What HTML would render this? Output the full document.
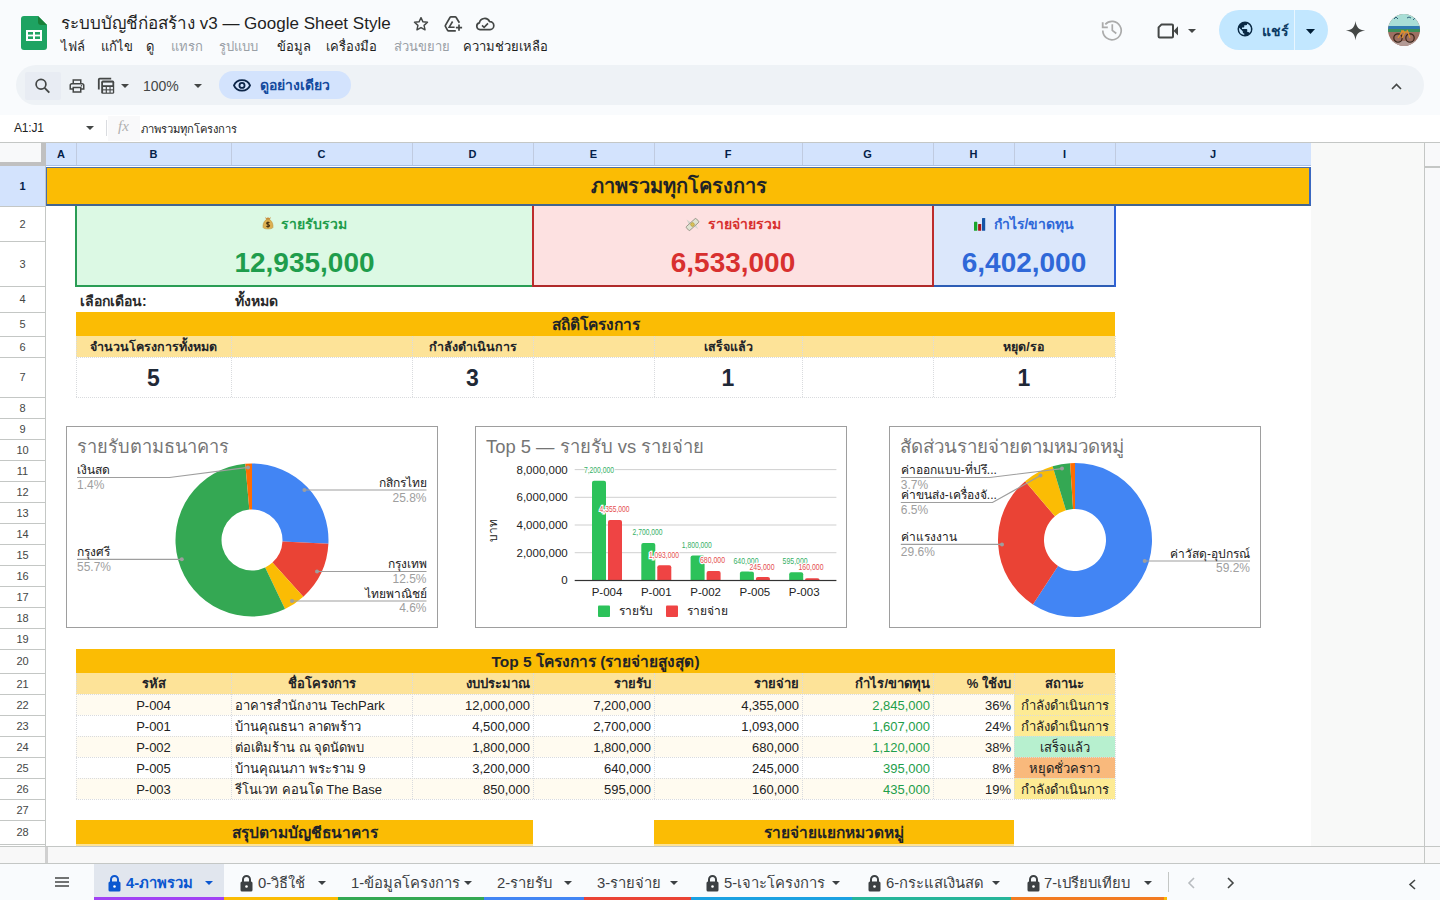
<!DOCTYPE html><html><head><meta charset="utf-8"><style>
*{box-sizing:border-box;margin:0;padding:0}
html,body{width:1440px;height:900px;overflow:hidden;background:#f9fbfd;font-family:'Liberation Sans',sans-serif;color:#1f1f1f}
.a{position:absolute}
.c{position:absolute;display:flex;align-items:center;white-space:nowrap;overflow:hidden}
svg{position:absolute;overflow:visible}
</style></head><body>

<svg style="left:21px;top:16px" width="26" height="34" viewBox="0 0 26 34">
<path d="M3 0H17L26 9V31A3 3 0 0 1 23 34H3A3 3 0 0 1 0 31V3A3 3 0 0 1 3 0Z" fill="#1ea362"/>
<path d="M17 0L26 9H20A3 3 0 0 1 17 6Z" fill="#188038"/>
<rect x="5" y="14" width="16" height="11" fill="#fff"/>
<rect x="7" y="16" width="5" height="2.6" fill="#1ea362"/><rect x="14" y="16" width="5" height="2.6" fill="#1ea362"/>
<rect x="7" y="20.4" width="5" height="2.6" fill="#1ea362"/><rect x="14" y="20.4" width="5" height="2.6" fill="#1ea362"/>
</svg>
<div class="a" style="left:61px;top:9px;font-size:17px;color:#1f1f1f;white-space:nowrap">ระบบบัญชีก่อสร้าง v3 — Google Sheet Style</div>
<svg style="left:412px;top:15px" width="18" height="18" viewBox="0 0 24 24"><path d="M12 3.5l2.6 5.6 6.1.6-4.6 4.1 1.3 6-5.4-3.1-5.4 3.1 1.3-6-4.6-4.1 6.1-.6z" fill="none" stroke="#444746" stroke-width="1.9" stroke-linejoin="round"/></svg>
<svg style="left:0;top:0" width="520" height="50"><path d="M459.4 22.8L456 17.3Q455.7 16.9 455.2 16.9H450.9Q450.4 16.9 450.1 17.3L445.4 25.4Q445.1 25.9 445.4 26.4L447.6 30.3Q447.9 30.8 448.4 30.8H455.8" fill="none" stroke="#444746" stroke-width="1.7" stroke-linejoin="round"/><path d="M452.6 21.5L449.2 27.2H454.6" fill="none" stroke="#444746" stroke-width="1.6"/><path d="M459 24.6V30.8M455.9 27.7H462.1" stroke="#444746" stroke-width="1.7"/><path d="M480 29.6A3.4 3.4 0 0 1 479.4 22.9A5.4 5.4 0 0 1 489.6 21.6A4 4 0 0 1 490 29.6Z" fill="none" stroke="#444746" stroke-width="1.7" stroke-linejoin="round"/><path d="M482 25.4L484.1 27.3L488 23.4" fill="none" stroke="#444746" stroke-width="1.6"/></svg>
<div class="a" style="left:61px;top:36px;font-size:13px;color:#1f1f1f;white-space:nowrap">ไฟล์</div>
<div class="a" style="left:101px;top:36px;font-size:13px;color:#1f1f1f;white-space:nowrap">แก้ไข</div>
<div class="a" style="left:146px;top:36px;font-size:13px;color:#1f1f1f;white-space:nowrap">ดู</div>
<div class="a" style="left:171px;top:36px;font-size:13px;color:#9aa0a6;white-space:nowrap">แทรก</div>
<div class="a" style="left:219px;top:36px;font-size:13px;color:#9aa0a6;white-space:nowrap">รูปแบบ</div>
<div class="a" style="left:277px;top:36px;font-size:13px;color:#1f1f1f;white-space:nowrap">ข้อมูล</div>
<div class="a" style="left:326px;top:36px;font-size:13px;color:#1f1f1f;white-space:nowrap">เครื่องมือ</div>
<div class="a" style="left:394px;top:36px;font-size:13px;color:#9aa0a6;white-space:nowrap">ส่วนขยาย</div>
<div class="a" style="left:463px;top:36px;font-size:13px;color:#1f1f1f;white-space:nowrap">ความช่วยเหลือ</div>
<svg style="left:0;top:0" width="1200" height="50"><path d="M1105.3 24.3A9.2 9.2 0 1 1 1102.8 30.6" fill="none" stroke="#ababab" stroke-width="1.7"/><path d="M1102.7 22.2V27.3H1107.8" fill="none" stroke="#ababab" stroke-width="1.8"/><path d="M1112.3 24.3V30.4L1116.3 33.5" fill="none" stroke="#ababab" stroke-width="1.7"/><path d="M1161.6 24.4H1172Q1173 24.4 1173 25.4V36.5Q1173 37.5 1172 37.5H1159.6Q1158.6 37.5 1158.6 36.5V27.4Z" fill="none" stroke="#444746" stroke-width="2" stroke-linejoin="round"/><path d="M1173.6 30.9L1178 26.2V35.6Z" fill="#444746"/></svg>
<svg style="left:1188px;top:29px" width="8" height="4" viewBox="0 0 8 4"><path d="M0 0h8L4 4z" fill="#444746"/></svg>
<div style="position:absolute;left:1219px;top:10px;width:109px;height:40px;background:#c2e7ff;border-radius:20px"></div>
<div style="position:absolute;left:1294px;top:10px;width:1px;height:40px;background:#e9f6ff"></div>
<svg style="left:1236px;top:20px" width="18" height="18" viewBox="0 0 24 24"><path d="M12 2a10 10 0 1 0 0 20 10 10 0 0 0 0-20zm-1 17.93A8 8 0 0 1 4 12c0-.62.08-1.21.21-1.79L9 15v1a2 2 0 0 0 2 2zm6.9-2.54A2 2 0 0 0 16 16h-1v-3a1 1 0 0 0-1-1H8v-2h2a1 1 0 0 0 1-1V7h2a2 2 0 0 0 2-2v-.41a7.98 7.98 0 0 1 2.9 12.8z" fill="#0a2a45"/></svg>
<div class="a" style="left:1262px;top:20px;font-size:14px;font-weight:bold;color:#0b3a63">แชร์</div>
<svg style="left:1306px;top:29px" width="9" height="5" viewBox="0 0 9 5"><path d="M0 0h9L4.5 5z" fill="#001d35"/></svg>
<svg style="left:1345px;top:20px" width="21" height="21" viewBox="0 0 24 24"><path d="M12 1C12.9 8.2 15.8 11.1 23 12 15.8 12.9 12.9 15.8 12 23 11.1 15.8 8.2 12.9 1 12 8.2 11.1 11.1 8.2 12 1z" fill="#444746"/></svg>
<svg style="left:1388px;top:14px" width="32" height="32" viewBox="0 0 32 32"><defs><clipPath id="av"><circle cx="16" cy="16" r="16"/></clipPath></defs><g clip-path="url(#av)">
<rect width="32" height="32" fill="#9c6f62"/><rect y="0" width="32" height="12" fill="#a9ded6"/><path d="M6 5l2-2 2 2M19 4l2-1 2 1M25 6l2-2" stroke="#2f5f7a" stroke-width="1" fill="none"/><rect y="12" width="32" height="3" fill="#2f7bb0"/><rect y="15" width="32" height="3" fill="#3b8f5a"/><rect y="27" width="32" height="5" fill="#b39a95"/>
<circle cx="10" cy="24" r="4.2" fill="none" stroke="#3a2418" stroke-width="1.2"/><circle cx="22" cy="24" r="4.2" fill="none" stroke="#3a2418" stroke-width="1.2"/><path d="M10 24l4-6h6l2 6M14 24l3-6M13 17h3M19 16l1 2" fill="none" stroke="#e0902a" stroke-width="1.3"/>
</g></svg>
<div style="position:absolute;left:16px;top:65px;width:1408px;height:40px;background:#eef2f6;border-radius:20px"></div>
<div style="position:absolute;left:25px;top:72px;width:36px;height:28px;background:#e8ecf3;border-radius:2px"></div>
<svg style="left:0;top:0" width="200" height="110"><circle cx="41" cy="84.3" r="4.9" fill="none" stroke="#444746" stroke-width="1.7"/><path d="M44.6 87.9L49.3 92.6" stroke="#444746" stroke-width="1.9"/></svg>
<svg style="left:68px;top:77px" width="18" height="18" viewBox="0 0 24 24"><path d="M19 8h-1V3H6v5H5c-1.66 0-3 1.34-3 3v6h4v4h12v-4h4v-6c0-1.66-1.34-3-3-3zM8 5h8v3H8V5zm8 14H8v-4h8v4zm2-4v-2H6v2H4v-4c0-.55.45-1 1-1h14c.55 0 1 .45 1 1v4h-2z" fill="#444746"/><circle cx="18" cy="11.5" r="1" fill="#444746"/></svg>
<svg style="left:0;top:0" width="200" height="110"><path d="M98.8 89.5V79.6Q98.8 78.7 99.7 78.7H111.2" fill="none" stroke="#444746" stroke-width="1.8"/><rect x="101.2" y="80.6" width="13" height="13.2" rx="1.6" fill="#444746"/><rect x="103" y="82.6" width="9.4" height="2.6" fill="#eef2f7"/><g fill="#eef2f7"><rect x="103.1" y="87" width="2.6" height="2.3"/><rect x="106.9" y="87" width="2.6" height="2.3"/><rect x="110.6" y="87" width="2.3" height="2.3"/><rect x="103.1" y="90.4" width="2.6" height="2.2"/><rect x="106.9" y="90.4" width="2.6" height="2.2"/><rect x="110.6" y="90.4" width="2.3" height="2.2"/></g></svg>
<svg style="left:121px;top:84px" width="8" height="4" viewBox="0 0 8 4"><path d="M0 0h8L4 4z" fill="#444746"/></svg>
<div class="a" style="left:143px;top:78px;font-size:14px;color:#444746">100%</div>
<svg style="left:194px;top:84px" width="8" height="4" viewBox="0 0 8 4"><path d="M0 0h8L4 4z" fill="#444746"/></svg>
<div style="position:absolute;left:219px;top:71px;width:132px;height:28px;background:#d3e3fd;border-radius:14px"></div>
<svg style="left:233px;top:77px" width="18" height="16" viewBox="0 0 24 20"><path d="M12 3.5C7 3.5 2.9 6.4 1.3 10.5 2.9 14.6 7 17.5 12 17.5s9.1-2.9 10.7-7C21.1 6.4 17 3.5 12 3.5z" fill="none" stroke="#0c2548" stroke-width="2.4"/><circle cx="12" cy="10.5" r="3.4" fill="none" stroke="#0c2548" stroke-width="2.4"/></svg>
<div class="a" style="left:260px;top:74px;font-size:14px;font-weight:bold;color:#144a9e;white-space:nowrap">ดูอย่างเดียว</div>
<svg style="left:1391px;top:83px" width="11" height="7" viewBox="0 0 11 7"><path d="M1 6l4.5-4.5L10 6" fill="none" stroke="#444746" stroke-width="1.6"/></svg>
<div style="position:absolute;left:0px;top:115px;width:1440px;height:27px;background:#fff"></div>
<div class="a" style="left:14px;top:121px;font-size:12px;color:#1f1f1f;letter-spacing:-0.2px">A1:J1</div>
<svg style="left:86px;top:126px" width="8" height="4" viewBox="0 0 8 4"><path d="M0 0h8L4 4z" fill="#444746"/></svg>
<div style="position:absolute;left:106px;top:120px;width:1px;height:16px;background:#dadce0"></div>
<div style="position:absolute;left:108px;top:116px;width:32px;height:25px;background:#f9f9fa"></div>
<div class="a" style="left:118px;top:118px;font-size:15px;font-style:italic;color:#b0b0b0;font-family:'Liberation Serif',serif">fx</div>
<div class="a" style="left:141px;top:120px;font-size:11.2px;color:#1f1f1f;white-space:nowrap">ภาพรวมทุกโครงการ</div>
<div style="position:absolute;left:0px;top:142px;width:1440px;height:704px;background:#fff"></div>
<div style="position:absolute;left:0px;top:142px;width:1440px;height:1px;background:#c4c7c5"></div>
<div style="position:absolute;left:1311px;top:143px;width:113px;height:703px;background:#f8f9f8"></div>
<div style="position:absolute;left:1424px;top:142px;width:1px;height:704px;background:#c4c7c5"></div>
<div style="position:absolute;left:1425px;top:143px;width:15px;height:703px;background:#f8f9fa"></div>
<div style="position:absolute;left:1425px;top:166px;width:15px;height:2px;background:#c4c7c5"></div>
<div style="position:absolute;left:46px;top:143px;width:1265px;height:23px;background:#d3e3fd"></div>
<div class="c" style="left:46px;top:142px;width:30px;height:23px;justify-content:center;font-size:11px;font-weight:bold;color:#041e49">A</div>
<div style="position:absolute;left:76px;top:143px;width:1px;height:23px;background:#c0cbe0"></div>
<div class="c" style="left:76px;top:142px;width:155px;height:23px;justify-content:center;font-size:11px;font-weight:bold;color:#041e49">B</div>
<div style="position:absolute;left:231px;top:143px;width:1px;height:23px;background:#c0cbe0"></div>
<div class="c" style="left:231px;top:142px;width:181px;height:23px;justify-content:center;font-size:11px;font-weight:bold;color:#041e49">C</div>
<div style="position:absolute;left:412px;top:143px;width:1px;height:23px;background:#c0cbe0"></div>
<div class="c" style="left:412px;top:142px;width:121px;height:23px;justify-content:center;font-size:11px;font-weight:bold;color:#041e49">D</div>
<div style="position:absolute;left:533px;top:143px;width:1px;height:23px;background:#c0cbe0"></div>
<div class="c" style="left:533px;top:142px;width:121px;height:23px;justify-content:center;font-size:11px;font-weight:bold;color:#041e49">E</div>
<div style="position:absolute;left:654px;top:143px;width:1px;height:23px;background:#c0cbe0"></div>
<div class="c" style="left:654px;top:142px;width:148px;height:23px;justify-content:center;font-size:11px;font-weight:bold;color:#041e49">F</div>
<div style="position:absolute;left:802px;top:143px;width:1px;height:23px;background:#c0cbe0"></div>
<div class="c" style="left:802px;top:142px;width:131px;height:23px;justify-content:center;font-size:11px;font-weight:bold;color:#041e49">G</div>
<div style="position:absolute;left:933px;top:143px;width:1px;height:23px;background:#c0cbe0"></div>
<div class="c" style="left:933px;top:142px;width:81px;height:23px;justify-content:center;font-size:11px;font-weight:bold;color:#041e49">H</div>
<div style="position:absolute;left:1014px;top:143px;width:1px;height:23px;background:#c0cbe0"></div>
<div class="c" style="left:1014px;top:142px;width:101px;height:23px;justify-content:center;font-size:11px;font-weight:bold;color:#041e49">I</div>
<div style="position:absolute;left:1115px;top:143px;width:1px;height:23px;background:#c0cbe0"></div>
<div class="c" style="left:1115px;top:142px;width:196px;height:23px;justify-content:center;font-size:11px;font-weight:bold;color:#041e49">J</div>
<div style="position:absolute;left:46px;top:165px;width:1265px;height:1px;background:#a8c0e8"></div>
<div style="position:absolute;left:0px;top:143px;width:41px;height:19px;background:#f8f9fa"></div>
<div style="position:absolute;left:41px;top:143px;width:5px;height:23px;background:#c0c0c0"></div>
<div style="position:absolute;left:0px;top:162px;width:46px;height:4px;background:#c0c0c0"></div>
<div style="position:absolute;left:45px;top:166px;width:1px;height:680px;background:#c4c7c5"></div>
<div class="c" style="left:0;top:166px;width:45px;height:40px;justify-content:center;background:#d3e3fd;font-size:11px;font-weight:bold;color:#041e49">1</div>
<div class="c" style="left:0;top:206px;width:45px;height:35px;justify-content:center;background:#ffffff;font-size:11px;font-weight:normal;color:#444746">2</div>
<div class="c" style="left:0;top:241px;width:45px;height:45px;justify-content:center;background:#ffffff;font-size:11px;font-weight:normal;color:#444746">3</div>
<div class="c" style="left:0;top:286px;width:45px;height:26px;justify-content:center;background:#ffffff;font-size:11px;font-weight:normal;color:#444746">4</div>
<div class="c" style="left:0;top:312px;width:45px;height:24px;justify-content:center;background:#ffffff;font-size:11px;font-weight:normal;color:#444746">5</div>
<div class="c" style="left:0;top:336px;width:45px;height:21px;justify-content:center;background:#ffffff;font-size:11px;font-weight:normal;color:#444746">6</div>
<div class="c" style="left:0;top:357px;width:45px;height:40px;justify-content:center;background:#ffffff;font-size:11px;font-weight:normal;color:#444746">7</div>
<div class="c" style="left:0;top:397px;width:45px;height:21px;justify-content:center;background:#ffffff;font-size:11px;font-weight:normal;color:#444746">8</div>
<div class="c" style="left:0;top:418px;width:45px;height:21px;justify-content:center;background:#ffffff;font-size:11px;font-weight:normal;color:#444746">9</div>
<div class="c" style="left:0;top:439px;width:45px;height:21px;justify-content:center;background:#ffffff;font-size:11px;font-weight:normal;color:#444746">10</div>
<div class="c" style="left:0;top:460px;width:45px;height:21px;justify-content:center;background:#ffffff;font-size:11px;font-weight:normal;color:#444746">11</div>
<div class="c" style="left:0;top:481px;width:45px;height:21px;justify-content:center;background:#ffffff;font-size:11px;font-weight:normal;color:#444746">12</div>
<div class="c" style="left:0;top:502px;width:45px;height:21px;justify-content:center;background:#ffffff;font-size:11px;font-weight:normal;color:#444746">13</div>
<div class="c" style="left:0;top:523px;width:45px;height:21px;justify-content:center;background:#ffffff;font-size:11px;font-weight:normal;color:#444746">14</div>
<div class="c" style="left:0;top:544px;width:45px;height:21px;justify-content:center;background:#ffffff;font-size:11px;font-weight:normal;color:#444746">15</div>
<div class="c" style="left:0;top:565px;width:45px;height:21px;justify-content:center;background:#ffffff;font-size:11px;font-weight:normal;color:#444746">16</div>
<div class="c" style="left:0;top:586px;width:45px;height:21px;justify-content:center;background:#ffffff;font-size:11px;font-weight:normal;color:#444746">17</div>
<div class="c" style="left:0;top:607px;width:45px;height:21px;justify-content:center;background:#ffffff;font-size:11px;font-weight:normal;color:#444746">18</div>
<div class="c" style="left:0;top:628px;width:45px;height:21px;justify-content:center;background:#ffffff;font-size:11px;font-weight:normal;color:#444746">19</div>
<div class="c" style="left:0;top:649px;width:45px;height:24px;justify-content:center;background:#ffffff;font-size:11px;font-weight:normal;color:#444746">20</div>
<div class="c" style="left:0;top:673px;width:45px;height:21px;justify-content:center;background:#ffffff;font-size:11px;font-weight:normal;color:#444746">21</div>
<div class="c" style="left:0;top:694px;width:45px;height:21px;justify-content:center;background:#ffffff;font-size:11px;font-weight:normal;color:#444746">22</div>
<div class="c" style="left:0;top:715px;width:45px;height:21px;justify-content:center;background:#ffffff;font-size:11px;font-weight:normal;color:#444746">23</div>
<div class="c" style="left:0;top:736px;width:45px;height:21px;justify-content:center;background:#ffffff;font-size:11px;font-weight:normal;color:#444746">24</div>
<div class="c" style="left:0;top:757px;width:45px;height:21px;justify-content:center;background:#ffffff;font-size:11px;font-weight:normal;color:#444746">25</div>
<div class="c" style="left:0;top:778px;width:45px;height:21px;justify-content:center;background:#ffffff;font-size:11px;font-weight:normal;color:#444746">26</div>
<div class="c" style="left:0;top:799px;width:45px;height:21px;justify-content:center;background:#ffffff;font-size:11px;font-weight:normal;color:#444746">27</div>
<div class="c" style="left:0;top:820px;width:45px;height:24px;justify-content:center;background:#ffffff;font-size:11px;font-weight:normal;color:#444746">28</div>
<div style="position:absolute;left:0px;top:206px;width:45px;height:1px;background:#c4c7c5"></div>
<div style="position:absolute;left:0px;top:241px;width:45px;height:1px;background:#c4c7c5"></div>
<div style="position:absolute;left:0px;top:286px;width:45px;height:1px;background:#c4c7c5"></div>
<div style="position:absolute;left:0px;top:312px;width:45px;height:1px;background:#c4c7c5"></div>
<div style="position:absolute;left:0px;top:336px;width:45px;height:1px;background:#c4c7c5"></div>
<div style="position:absolute;left:0px;top:357px;width:45px;height:1px;background:#c4c7c5"></div>
<div style="position:absolute;left:0px;top:397px;width:45px;height:1px;background:#c4c7c5"></div>
<div style="position:absolute;left:0px;top:418px;width:45px;height:1px;background:#c4c7c5"></div>
<div style="position:absolute;left:0px;top:439px;width:45px;height:1px;background:#c4c7c5"></div>
<div style="position:absolute;left:0px;top:460px;width:45px;height:1px;background:#c4c7c5"></div>
<div style="position:absolute;left:0px;top:481px;width:45px;height:1px;background:#c4c7c5"></div>
<div style="position:absolute;left:0px;top:502px;width:45px;height:1px;background:#c4c7c5"></div>
<div style="position:absolute;left:0px;top:523px;width:45px;height:1px;background:#c4c7c5"></div>
<div style="position:absolute;left:0px;top:544px;width:45px;height:1px;background:#c4c7c5"></div>
<div style="position:absolute;left:0px;top:565px;width:45px;height:1px;background:#c4c7c5"></div>
<div style="position:absolute;left:0px;top:586px;width:45px;height:1px;background:#c4c7c5"></div>
<div style="position:absolute;left:0px;top:607px;width:45px;height:1px;background:#c4c7c5"></div>
<div style="position:absolute;left:0px;top:628px;width:45px;height:1px;background:#c4c7c5"></div>
<div style="position:absolute;left:0px;top:649px;width:45px;height:1px;background:#c4c7c5"></div>
<div style="position:absolute;left:0px;top:673px;width:45px;height:1px;background:#c4c7c5"></div>
<div style="position:absolute;left:0px;top:694px;width:45px;height:1px;background:#c4c7c5"></div>
<div style="position:absolute;left:0px;top:715px;width:45px;height:1px;background:#c4c7c5"></div>
<div style="position:absolute;left:0px;top:736px;width:45px;height:1px;background:#c4c7c5"></div>
<div style="position:absolute;left:0px;top:757px;width:45px;height:1px;background:#c4c7c5"></div>
<div style="position:absolute;left:0px;top:778px;width:45px;height:1px;background:#c4c7c5"></div>
<div style="position:absolute;left:0px;top:799px;width:45px;height:1px;background:#c4c7c5"></div>
<div style="position:absolute;left:0px;top:820px;width:45px;height:1px;background:#c4c7c5"></div>
<div style="position:absolute;left:0px;top:844px;width:45px;height:1px;background:#c4c7c5"></div>
<div style="position:absolute;left:46px;top:167px;width:1265px;height:39px;background:#fbbc04;border:1px solid #4a6ea8;border-bottom:2px solid #43658f;border-right:2px solid #3a68c0"></div>
<div class="c" style="left:46px;top:166px;width:1265px;height:40px;justify-content:center;font-size:20px;font-weight:bold;color:#1f2428">ภาพรวมทุกโครงการ</div>
<div style="position:absolute;left:75px;top:206px;width:458px;height:81px;background:#dcf9e4"></div>
<div class="c" style="left:76px;top:210px;width:457px;height:28px;justify-content:center;font-size:14px;font-weight:bold;color:#1f9d4c"><svg style="position:relative;top:-1px" width="10" height="14" viewBox="0 0 10 14"><path d="M2.3 0.8L3.6 2.2 5 1.2 6.4 2.2 7.7 0.8 7 3.8H3z" fill="#c98a3a"/><path d="M3.2 3.6h3.6C9.6 5.6 10.3 9 9.9 11.6 9.4 13.4 0.6 13.4 0.1 11.6-.3 9 .4 5.6 3.2 3.6z" fill="#ddb052" stroke="#b58a30" stroke-width=".5"/><path d="M6.5 6.8C6 6 3.6 6 3.6 7.3 3.6 8.6 6.6 8.3 6.6 9.8 6.6 11.1 4 11 3.4 10.2M5 5.6v6.2" fill="none" stroke="#4a3410" stroke-width="1.1"/></svg><span style="margin-left:8px">รายรับรวม</span></div>
<div class="c" style="left:76px;top:244px;width:457px;height:38px;justify-content:center;font-size:28px;font-weight:bold;color:#1f9d4c">12,935,000</div>
<div style="position:absolute;left:533px;top:206px;width:400px;height:81px;background:#fde1e1"></div>
<div class="c" style="left:533px;top:210px;width:400px;height:28px;justify-content:center;font-size:14px;font-weight:bold;color:#d8302f"><svg style="position:relative" width="15" height="13" viewBox="0 0 15 13"><path d="M1.5 1.5L6 4.5 4 6.5z" fill="#d2d3cc"/><path d="M13.5 11.5L9 8.5 11 6.5z" fill="#d8dad2"/><g transform="rotate(-42 7.5 6.5)"><rect x="0.8" y="3.9" width="13.4" height="5.2" rx="1" fill="#dfe3d2" stroke="#8c8a7e" stroke-width=".8"/><circle cx="7.5" cy="6.5" r="1.9" fill="#d8c058" stroke="#a89030" stroke-width=".5"/></g></svg><span style="margin-left:8px">รายจ่ายรวม</span></div>
<div class="c" style="left:533px;top:244px;width:400px;height:38px;justify-content:center;font-size:28px;font-weight:bold;color:#d8302f">6,533,000</div>
<div style="position:absolute;left:933px;top:206px;width:182px;height:81px;background:#dbe7fb"></div>
<div class="c" style="left:933px;top:210px;width:182px;height:28px;justify-content:center;font-size:14px;font-weight:bold;color:#2f68d8"><svg style="position:relative" width="12" height="13" viewBox="0 0 12 13"><rect x="0" y="3.8" width="3.3" height="9" rx=".6" fill="#1ba52a"/><rect x="4.1" y="5.9" width="3.1" height="6.9" rx=".6" fill="#a8191a"/><rect x="8" y="0" width="3.2" height="12.8" rx=".6" fill="#1554a6"/></svg><span style="margin-left:8px">กำไร/ขาดทุน</span></div>
<div class="c" style="left:933px;top:244px;width:182px;height:38px;justify-content:center;font-size:28px;font-weight:bold;color:#2f68d8">6,402,000</div>
<div style="position:absolute;left:75px;top:206px;width:2px;height:81px;background:#2a9d55"></div>
<div style="position:absolute;left:75px;top:285px;width:458px;height:2px;background:#2a9d55"></div>
<div style="position:absolute;left:532px;top:206px;width:2px;height:81px;background:#bd2c2c"></div>
<div style="position:absolute;left:932px;top:206px;width:2px;height:81px;background:#bd2c2c"></div>
<div style="position:absolute;left:533px;top:285px;width:401px;height:2px;background:#b02a2a"></div>
<div style="position:absolute;left:934px;top:285px;width:182px;height:2px;background:#2d5db5"></div>
<div style="position:absolute;left:1114px;top:206px;width:2px;height:81px;background:#2f62d6"></div>
<div class="a" style="left:80px;top:290px;font-size:14px;font-weight:bold;color:#2a2a2a">เลือกเดือน:</div>
<div class="a" style="left:235px;top:290px;font-size:14px;font-weight:bold;color:#2a2a2a">ทั้งหมด</div>
<div style="position:absolute;left:76px;top:312px;width:1039px;height:24px;background:#fbbc04"></div>
<div class="c" style="left:76px;top:312px;width:1039px;height:24px;justify-content:center;font-size:15.5px;font-weight:bold;color:#1f2428;padding-top:1px">สถิติโครงการ</div>
<div style="position:absolute;left:76px;top:336px;width:1039px;height:21px;background:#fde398"></div>
<div class="c" style="left:76px;top:336px;width:155px;height:21px;justify-content:center;padding:0 4px;font-size:12.5px;font-weight:bold;color:#1f2428">จำนวนโครงการทั้งหมด</div>
<div class="c" style="left:412px;top:336px;width:121px;height:21px;justify-content:center;padding:0 4px;font-size:12.5px;font-weight:bold;color:#1f2428">กำลังดำเนินการ</div>
<div class="c" style="left:654px;top:336px;width:148px;height:21px;justify-content:center;padding:0 4px;font-size:12.5px;font-weight:bold;color:#1f2428">เสร็จแล้ว</div>
<div class="c" style="left:933px;top:336px;width:182px;height:21px;justify-content:center;padding:0 4px;font-size:12.5px;font-weight:bold;color:#1f2428">หยุด/รอ</div>
<div class="c" style="left:76px;top:357px;width:155px;height:40px;justify-content:center;padding:0 4px;font-size:23px;font-weight:bold;color:#1f2937;padding-top:2px">5</div>
<div class="c" style="left:412px;top:357px;width:121px;height:40px;justify-content:center;padding:0 4px;font-size:23px;font-weight:bold;color:#1f2937;padding-top:2px">3</div>
<div class="c" style="left:654px;top:357px;width:148px;height:40px;justify-content:center;padding:0 4px;font-size:23px;font-weight:bold;color:#1f2937;padding-top:2px">1</div>
<div class="c" style="left:933px;top:357px;width:182px;height:40px;justify-content:center;padding:0 4px;font-size:23px;font-weight:bold;color:#1f2937;padding-top:2px">1</div>
<div style="position:absolute;left:76px;top:336px;width:0px;height:61px;border-left:1px dotted #d9dbde"></div>
<div style="position:absolute;left:231px;top:336px;width:0px;height:61px;border-left:1px dotted #d9dbde"></div>
<div style="position:absolute;left:412px;top:336px;width:0px;height:61px;border-left:1px dotted #d9dbde"></div>
<div style="position:absolute;left:533px;top:336px;width:0px;height:61px;border-left:1px dotted #d9dbde"></div>
<div style="position:absolute;left:654px;top:336px;width:0px;height:61px;border-left:1px dotted #d9dbde"></div>
<div style="position:absolute;left:802px;top:336px;width:0px;height:61px;border-left:1px dotted #d9dbde"></div>
<div style="position:absolute;left:933px;top:336px;width:0px;height:61px;border-left:1px dotted #d9dbde"></div>
<div style="position:absolute;left:1115px;top:336px;width:0px;height:61px;border-left:1px dotted #d9dbde"></div>
<div style="position:absolute;left:76px;top:357px;width:1039px;height:0px;border-top:1px dotted #d9dbde"></div>
<div style="position:absolute;left:76px;top:397px;width:1039px;height:0px;border-top:1px dotted #d9dbde"></div>
<div style="position:absolute;left:76px;top:649px;width:1039px;height:24px;background:#fbbc04"></div>
<div class="c" style="left:76px;top:649px;width:1039px;height:24px;justify-content:center;font-size:15.5px;font-weight:bold;color:#1f2428;padding-top:1px">Top 5 โครงการ (รายจ่ายสูงสุด)</div>
<div style="position:absolute;left:76px;top:673px;width:1039px;height:21px;background:#fde398"></div>
<div class="c" style="left:76px;top:673px;width:155px;height:21px;justify-content:center;padding:0 3px;font-size:13px;font-weight:bold;color:#1f2428">รหัส</div>
<div class="c" style="left:231px;top:673px;width:181px;height:21px;justify-content:center;padding:0 3px;font-size:13px;font-weight:bold;color:#1f2428">ชื่อโครงการ</div>
<div class="c" style="left:412px;top:673px;width:121px;height:21px;justify-content:flex-end;padding:0 3px;font-size:13px;font-weight:bold;color:#1f2428">งบประมาณ</div>
<div class="c" style="left:533px;top:673px;width:121px;height:21px;justify-content:flex-end;padding:0 3px;font-size:13px;font-weight:bold;color:#1f2428">รายรับ</div>
<div class="c" style="left:654px;top:673px;width:148px;height:21px;justify-content:flex-end;padding:0 3px;font-size:13px;font-weight:bold;color:#1f2428">รายจ่าย</div>
<div class="c" style="left:802px;top:673px;width:131px;height:21px;justify-content:flex-end;padding:0 3px;font-size:13px;font-weight:bold;color:#1f2428">กำไร/ขาดทุน</div>
<div class="c" style="left:933px;top:673px;width:81px;height:21px;justify-content:flex-end;padding:0 3px;font-size:13px;font-weight:bold;color:#1f2428">% ใช้งบ</div>
<div class="c" style="left:1014px;top:673px;width:101px;height:21px;justify-content:center;padding:0 3px;font-size:13px;font-weight:bold;color:#1f2428">สถานะ</div>
<div style="position:absolute;left:76px;top:694px;width:938px;height:21px;background:#fffbf0"></div>
<div style="position:absolute;left:1014px;top:694px;width:101px;height:21px;background:#fdeb94"></div>
<div class="c" style="left:76px;top:694px;width:155px;height:21px;justify-content:center;padding:0 4px;font-size:13px;color:#222222;padding-top:1px">P-004</div>
<div class="c" style="left:231px;top:694px;width:181px;height:21px;justify-content:flex-start;padding:0 4px;font-size:13px;color:#222222;padding-top:1px">อาคารสำนักงาน TechPark</div>
<div class="c" style="left:412px;top:694px;width:121px;height:21px;justify-content:flex-end;padding:0 3px;font-size:13px;color:#222222;padding-top:1px">12,000,000</div>
<div class="c" style="left:533px;top:694px;width:121px;height:21px;justify-content:flex-end;padding:0 3px;font-size:13px;color:#222222;padding-top:1px">7,200,000</div>
<div class="c" style="left:654px;top:694px;width:148px;height:21px;justify-content:flex-end;padding:0 3px;font-size:13px;color:#222222;padding-top:1px">4,355,000</div>
<div class="c" style="left:802px;top:694px;width:131px;height:21px;justify-content:flex-end;padding:0 3px;font-size:13px;color:#1e9e4a;padding-top:1px">2,845,000</div>
<div class="c" style="left:933px;top:694px;width:81px;height:21px;justify-content:flex-end;padding:0 3px;font-size:13px;color:#222222;padding-top:1px">36%</div>
<div class="c" style="left:1014px;top:694px;width:101px;height:21px;justify-content:center;padding:0 0px;font-size:13px;color:#222222;padding-top:1px">กำลังดำเนินการ</div>
<div style="position:absolute;left:1014px;top:715px;width:101px;height:21px;background:#fdeb94"></div>
<div class="c" style="left:76px;top:715px;width:155px;height:21px;justify-content:center;padding:0 4px;font-size:13px;color:#222222;padding-top:1px">P-001</div>
<div class="c" style="left:231px;top:715px;width:181px;height:21px;justify-content:flex-start;padding:0 4px;font-size:13px;color:#222222;padding-top:1px">บ้านคุณธนา ลาดพร้าว</div>
<div class="c" style="left:412px;top:715px;width:121px;height:21px;justify-content:flex-end;padding:0 3px;font-size:13px;color:#222222;padding-top:1px">4,500,000</div>
<div class="c" style="left:533px;top:715px;width:121px;height:21px;justify-content:flex-end;padding:0 3px;font-size:13px;color:#222222;padding-top:1px">2,700,000</div>
<div class="c" style="left:654px;top:715px;width:148px;height:21px;justify-content:flex-end;padding:0 3px;font-size:13px;color:#222222;padding-top:1px">1,093,000</div>
<div class="c" style="left:802px;top:715px;width:131px;height:21px;justify-content:flex-end;padding:0 3px;font-size:13px;color:#1e9e4a;padding-top:1px">1,607,000</div>
<div class="c" style="left:933px;top:715px;width:81px;height:21px;justify-content:flex-end;padding:0 3px;font-size:13px;color:#222222;padding-top:1px">24%</div>
<div class="c" style="left:1014px;top:715px;width:101px;height:21px;justify-content:center;padding:0 0px;font-size:13px;color:#222222;padding-top:1px">กำลังดำเนินการ</div>
<div style="position:absolute;left:76px;top:736px;width:938px;height:21px;background:#fffbf0"></div>
<div style="position:absolute;left:1014px;top:736px;width:101px;height:21px;background:#b7f0cf"></div>
<div class="c" style="left:76px;top:736px;width:155px;height:21px;justify-content:center;padding:0 4px;font-size:13px;color:#222222;padding-top:1px">P-002</div>
<div class="c" style="left:231px;top:736px;width:181px;height:21px;justify-content:flex-start;padding:0 4px;font-size:13px;color:#222222;padding-top:1px">ต่อเติมร้าน ณ จุดนัดพบ</div>
<div class="c" style="left:412px;top:736px;width:121px;height:21px;justify-content:flex-end;padding:0 3px;font-size:13px;color:#222222;padding-top:1px">1,800,000</div>
<div class="c" style="left:533px;top:736px;width:121px;height:21px;justify-content:flex-end;padding:0 3px;font-size:13px;color:#222222;padding-top:1px">1,800,000</div>
<div class="c" style="left:654px;top:736px;width:148px;height:21px;justify-content:flex-end;padding:0 3px;font-size:13px;color:#222222;padding-top:1px">680,000</div>
<div class="c" style="left:802px;top:736px;width:131px;height:21px;justify-content:flex-end;padding:0 3px;font-size:13px;color:#1e9e4a;padding-top:1px">1,120,000</div>
<div class="c" style="left:933px;top:736px;width:81px;height:21px;justify-content:flex-end;padding:0 3px;font-size:13px;color:#222222;padding-top:1px">38%</div>
<div class="c" style="left:1014px;top:736px;width:101px;height:21px;justify-content:center;padding:0 0px;font-size:13px;color:#222222;padding-top:1px">เสร็จแล้ว</div>
<div style="position:absolute;left:1014px;top:757px;width:101px;height:21px;background:#f9b97c"></div>
<div class="c" style="left:76px;top:757px;width:155px;height:21px;justify-content:center;padding:0 4px;font-size:13px;color:#222222;padding-top:1px">P-005</div>
<div class="c" style="left:231px;top:757px;width:181px;height:21px;justify-content:flex-start;padding:0 4px;font-size:13px;color:#222222;padding-top:1px">บ้านคุณนภา พระราม 9</div>
<div class="c" style="left:412px;top:757px;width:121px;height:21px;justify-content:flex-end;padding:0 3px;font-size:13px;color:#222222;padding-top:1px">3,200,000</div>
<div class="c" style="left:533px;top:757px;width:121px;height:21px;justify-content:flex-end;padding:0 3px;font-size:13px;color:#222222;padding-top:1px">640,000</div>
<div class="c" style="left:654px;top:757px;width:148px;height:21px;justify-content:flex-end;padding:0 3px;font-size:13px;color:#222222;padding-top:1px">245,000</div>
<div class="c" style="left:802px;top:757px;width:131px;height:21px;justify-content:flex-end;padding:0 3px;font-size:13px;color:#1e9e4a;padding-top:1px">395,000</div>
<div class="c" style="left:933px;top:757px;width:81px;height:21px;justify-content:flex-end;padding:0 3px;font-size:13px;color:#222222;padding-top:1px">8%</div>
<div class="c" style="left:1014px;top:757px;width:101px;height:21px;justify-content:center;padding:0 0px;font-size:13px;color:#222222;padding-top:1px">หยุดชั่วคราว</div>
<div style="position:absolute;left:76px;top:778px;width:938px;height:21px;background:#fffbf0"></div>
<div style="position:absolute;left:1014px;top:778px;width:101px;height:21px;background:#fdeb94"></div>
<div class="c" style="left:76px;top:778px;width:155px;height:21px;justify-content:center;padding:0 4px;font-size:13px;color:#222222;padding-top:1px">P-003</div>
<div class="c" style="left:231px;top:778px;width:181px;height:21px;justify-content:flex-start;padding:0 4px;font-size:13px;color:#222222;padding-top:1px">รีโนเวท คอนโด The Base</div>
<div class="c" style="left:412px;top:778px;width:121px;height:21px;justify-content:flex-end;padding:0 3px;font-size:13px;color:#222222;padding-top:1px">850,000</div>
<div class="c" style="left:533px;top:778px;width:121px;height:21px;justify-content:flex-end;padding:0 3px;font-size:13px;color:#222222;padding-top:1px">595,000</div>
<div class="c" style="left:654px;top:778px;width:148px;height:21px;justify-content:flex-end;padding:0 3px;font-size:13px;color:#222222;padding-top:1px">160,000</div>
<div class="c" style="left:802px;top:778px;width:131px;height:21px;justify-content:flex-end;padding:0 3px;font-size:13px;color:#1e9e4a;padding-top:1px">435,000</div>
<div class="c" style="left:933px;top:778px;width:81px;height:21px;justify-content:flex-end;padding:0 3px;font-size:13px;color:#222222;padding-top:1px">19%</div>
<div class="c" style="left:1014px;top:778px;width:101px;height:21px;justify-content:center;padding:0 0px;font-size:13px;color:#222222;padding-top:1px">กำลังดำเนินการ</div>
<div style="position:absolute;left:76px;top:673px;width:0px;height:126px;border-left:1px dotted #d9dbde"></div>
<div style="position:absolute;left:231px;top:673px;width:0px;height:126px;border-left:1px dotted #d9dbde"></div>
<div style="position:absolute;left:412px;top:673px;width:0px;height:126px;border-left:1px dotted #d9dbde"></div>
<div style="position:absolute;left:533px;top:673px;width:0px;height:126px;border-left:1px dotted #d9dbde"></div>
<div style="position:absolute;left:654px;top:673px;width:0px;height:126px;border-left:1px dotted #d9dbde"></div>
<div style="position:absolute;left:802px;top:673px;width:0px;height:126px;border-left:1px dotted #d9dbde"></div>
<div style="position:absolute;left:933px;top:673px;width:0px;height:126px;border-left:1px dotted #d9dbde"></div>
<div style="position:absolute;left:1014px;top:673px;width:0px;height:126px;border-left:1px dotted #d9dbde"></div>
<div style="position:absolute;left:1115px;top:673px;width:0px;height:126px;border-left:1px dotted #d9dbde"></div>
<div style="position:absolute;left:76px;top:694px;width:1039px;height:0px;border-top:1px dotted #d9dbde"></div>
<div style="position:absolute;left:76px;top:715px;width:1039px;height:0px;border-top:1px dotted #d9dbde"></div>
<div style="position:absolute;left:76px;top:736px;width:1039px;height:0px;border-top:1px dotted #d9dbde"></div>
<div style="position:absolute;left:76px;top:757px;width:1039px;height:0px;border-top:1px dotted #d9dbde"></div>
<div style="position:absolute;left:76px;top:778px;width:1039px;height:0px;border-top:1px dotted #d9dbde"></div>
<div style="position:absolute;left:76px;top:799px;width:1039px;height:0px;border-top:1px dotted #d9dbde"></div>
<div style="position:absolute;left:76px;top:820px;width:457px;height:24px;background:#fbbc04"></div>
<div class="c" style="left:76px;top:820px;width:457px;height:24px;justify-content:center;font-size:15.5px;font-weight:bold;color:#1f2428;padding-top:1px">สรุปตามบัญชีธนาคาร</div>
<div style="position:absolute;left:654px;top:820px;width:360px;height:24px;background:#fbbc04"></div>
<div style="position:absolute;left:76px;top:844px;width:457px;height:2px;background:#fde398"></div>
<div style="position:absolute;left:654px;top:844px;width:360px;height:2px;background:#fde398"></div>
<div class="c" style="left:654px;top:820px;width:360px;height:24px;justify-content:center;font-size:15.5px;font-weight:bold;color:#1f2428;padding-top:1px">รายจ่ายแยกหมวดหมู่</div>
<svg style="left:0;top:0" width="1440" height="900" viewBox="0 0 1440 900" font-family="Liberation Sans, sans-serif"><rect x="66.5" y="426.5" width="371" height="201" fill="#fff" stroke="#9e9e9e" stroke-width="1"/><rect x="475.5" y="426.5" width="371" height="201" fill="#fff" stroke="#9e9e9e" stroke-width="1"/><rect x="889.5" y="426.5" width="371" height="201" fill="#fff" stroke="#9e9e9e" stroke-width="1"/><text x="77" y="453" font-size="18.2" fill="#757575">รายรับตามธนาคาร</text><path d="M252.00 463.50A76.5 76.5 0 0 1 328.40 543.84L282.46 541.53A30.5 30.5 0 0 0 252.00 509.50Z" fill="#4285f4"/><path d="M328.40 543.84A76.5 76.5 0 0 1 303.31 596.74L272.46 562.62A30.5 30.5 0 0 0 282.46 541.53Z" fill="#ea4335"/><path d="M303.31 596.74A76.5 76.5 0 0 1 285.01 609.01L265.16 567.52A30.5 30.5 0 0 0 272.46 562.62Z" fill="#fbbc04"/><path d="M285.01 609.01A76.5 76.5 0 1 1 245.28 463.80L249.32 509.62A30.5 30.5 0 1 0 265.16 567.52Z" fill="#34a853"/><path d="M245.28 463.80A76.5 76.5 0 0 1 252.00 463.50L252.00 509.50A30.5 30.5 0 0 0 249.32 509.62Z" fill="#ff6d01"/><path d="M304.4 490 L426.5 490" fill="none" stroke="#9e9e9e" stroke-width="1.2"/><circle cx="304.4" cy="490" r="2" fill="#9e9e9e"/><text x="426.5" y="487" font-size="12" fill="#222" text-anchor="end">กสิกรไทย</text><text x="426.5" y="501.5" font-size="12" fill="#9e9e9e" text-anchor="end">25.8%</text><path d="M317 571.5 L426.5 571.5" fill="none" stroke="#9e9e9e" stroke-width="1.2"/><circle cx="317" cy="571.5" r="2" fill="#9e9e9e"/><text x="426.5" y="568" font-size="12" fill="#222" text-anchor="end">กรุงเทพ</text><text x="426.5" y="582.5" font-size="12" fill="#9e9e9e" text-anchor="end">12.5%</text><path d="M292 601 L426.5 601" fill="none" stroke="#9e9e9e" stroke-width="1.2"/><circle cx="292" cy="601" r="2" fill="#9e9e9e"/><text x="426.5" y="597.5" font-size="12" fill="#222" text-anchor="end">ไทยพาณิชย์</text><text x="426.5" y="612.0" font-size="12" fill="#9e9e9e" text-anchor="end">4.6%</text><path d="M181.8 559.3 L77 559.3" fill="none" stroke="#9e9e9e" stroke-width="1.2"/><circle cx="181.8" cy="559.3" r="2" fill="#9e9e9e"/><text x="77" y="556" font-size="12" fill="#222" text-anchor="start">กรุงศรี</text><text x="77" y="570.5" font-size="12" fill="#9e9e9e" text-anchor="start">55.7%</text><path d="M248 467.4 L169.5 477.5 L77 477.5" fill="none" stroke="#9e9e9e" stroke-width="1.2"/><circle cx="248" cy="467.4" r="2" fill="#9e9e9e"/><text x="77" y="474" font-size="12" fill="#222" text-anchor="start">เงินสด</text><text x="77" y="488.5" font-size="12" fill="#9e9e9e" text-anchor="start">1.4%</text><text x="486" y="452.5" font-size="18.4" fill="#757575">Top 5 — รายรับ vs รายจ่าย</text><text x="567.7" y="584.40" font-size="11.5" fill="#222" text-anchor="end">0</text><rect x="574.7" y="552.20" width="261.7" height="1" fill="#d0d0d0"/><text x="567.7" y="556.70" font-size="11.5" fill="#222" text-anchor="end">2,000,000</text><rect x="574.7" y="524.50" width="261.7" height="1" fill="#d0d0d0"/><text x="567.7" y="529.00" font-size="11.5" fill="#222" text-anchor="end">4,000,000</text><rect x="574.7" y="496.80" width="261.7" height="1" fill="#d0d0d0"/><text x="567.7" y="501.30" font-size="11.5" fill="#222" text-anchor="end">6,000,000</text><rect x="574.7" y="469.10" width="261.7" height="1" fill="#d0d0d0"/><text x="567.7" y="473.60" font-size="11.5" fill="#222" text-anchor="end">8,000,000</text><text transform="translate(496.5 530.5) rotate(-90)" font-size="12" fill="#222" text-anchor="middle">บาท</text><path d="M592.0 580.4V482.68Q592.0 480.68 594.0 480.68H604.0Q606.0 480.68 606.0 482.68V580.4Z" fill="#2cc25a"/><path d="M608.0 580.4V522.08Q608.0 520.08 610.0 520.08H620.0Q622.0 520.08 622.0 522.08V580.4Z" fill="#ef4444"/><text x="607.0" y="596" font-size="11.5" fill="#222" text-anchor="middle">P-004</text><text x="584.0" y="472.8" font-size="8.6" fill="#34b065" textLength="30" lengthAdjust="spacingAndGlyphs" stroke="#fff" stroke-width="2.5" paint-order="stroke">7,200,000</text><text x="599.6" y="512.0" font-size="8.6" fill="#e54e4e" textLength="30" lengthAdjust="spacingAndGlyphs" stroke="#fff" stroke-width="2.5" paint-order="stroke">4,355,000</text><path d="M641.3 580.4V545.00Q641.3 543.00 643.3 543.00H653.3Q655.3 543.00 655.3 545.00V580.4Z" fill="#2cc25a"/><path d="M657.3 580.4V567.26Q657.3 565.26 659.3 565.26H669.3Q671.3 565.26 671.3 567.26V580.4Z" fill="#ef4444"/><text x="656.3" y="596" font-size="11.5" fill="#222" text-anchor="middle">P-001</text><text x="632.6" y="534.8000000000001" font-size="8.6" fill="#34b065" textLength="30" lengthAdjust="spacingAndGlyphs" stroke="#fff" stroke-width="2.5" paint-order="stroke">2,700,000</text><text x="648.9" y="557.8000000000001" font-size="8.6" fill="#e54e4e" textLength="30" lengthAdjust="spacingAndGlyphs" stroke="#fff" stroke-width="2.5" paint-order="stroke">1,093,000</text><path d="M690.6 580.4V557.47Q690.6 555.47 692.6 555.47H702.6Q704.6 555.47 704.6 557.47V580.4Z" fill="#2cc25a"/><path d="M706.6 580.4V572.98Q706.6 570.98 708.6 570.98H718.6Q720.6 570.98 720.6 572.98V580.4Z" fill="#ef4444"/><text x="705.6" y="596" font-size="11.5" fill="#222" text-anchor="middle">P-002</text><text x="681.8" y="547.8000000000001" font-size="8.6" fill="#34b065" textLength="30" lengthAdjust="spacingAndGlyphs" stroke="#fff" stroke-width="2.5" paint-order="stroke">1,800,000</text><text x="700.0" y="563.2" font-size="8.6" fill="#e54e4e" textLength="25" lengthAdjust="spacingAndGlyphs" stroke="#fff" stroke-width="2.5" paint-order="stroke">680,000</text><path d="M739.9 580.4V573.54Q739.9 571.54 741.9 571.54H751.9Q753.9 571.54 753.9 573.54V580.4Z" fill="#2cc25a"/><path d="M755.9 580.4V578.70Q755.9 577.01 757.9 577.01H767.9Q769.9 577.01 769.9 578.70V580.4Z" fill="#ef4444"/><text x="754.9" y="596" font-size="11.5" fill="#222" text-anchor="middle">P-005</text><text x="733.5" y="564.0" font-size="8.6" fill="#34b065" textLength="25" lengthAdjust="spacingAndGlyphs" stroke="#fff" stroke-width="2.5" paint-order="stroke">640,000</text><text x="749.5" y="569.5" font-size="8.6" fill="#e54e4e" textLength="25" lengthAdjust="spacingAndGlyphs" stroke="#fff" stroke-width="2.5" paint-order="stroke">245,000</text><path d="M789.2 580.4V574.16Q789.2 572.16 791.2 572.16H801.2Q803.2 572.16 803.2 574.16V580.4Z" fill="#2cc25a"/><path d="M805.2 580.4V579.29Q805.2 578.18 807.2 578.18H817.2Q819.2 578.18 819.2 579.29V580.4Z" fill="#ef4444"/><text x="804.2" y="596" font-size="11.5" fill="#222" text-anchor="middle">P-003</text><text x="782.6" y="564.0" font-size="8.6" fill="#34b065" textLength="25" lengthAdjust="spacingAndGlyphs" stroke="#fff" stroke-width="2.5" paint-order="stroke">595,000</text><text x="798.5" y="570.2" font-size="8.6" fill="#e54e4e" textLength="25" lengthAdjust="spacingAndGlyphs" stroke="#fff" stroke-width="2.5" paint-order="stroke">160,000</text><rect x="574.7" y="579.9" width="261.7" height="1.2" fill="#333"/><rect x="598" y="605.5" width="12" height="11.5" rx="1" fill="#2cc25a"/><text x="618.5" y="615" font-size="12" fill="#222">รายรับ</text><rect x="666" y="605.5" width="12" height="11.5" rx="1" fill="#ef4444"/><text x="686.5" y="615" font-size="12" fill="#222">รายจ่าย</text><text x="900" y="453" font-size="18.7" fill="#757575">สัดส่วนรายจ่ายตามหมวดหมู่</text><path d="M1075.00 463.00A77 77 0 1 1 1032.93 604.49L1058.06 565.96A31 31 0 1 0 1075.00 509.00Z" fill="#4285f4"/><path d="M1032.93 604.49A77 77 0 0 1 1025.18 481.29L1054.94 516.36A31 31 0 0 0 1058.06 565.96Z" fill="#ea4335"/><path d="M1025.18 481.29A77 77 0 0 1 1052.59 466.33L1065.98 510.34A31 31 0 0 0 1054.94 516.36Z" fill="#fbbc04"/><path d="M1052.59 466.33A77 77 0 0 1 1070.17 463.15L1073.05 509.06A31 31 0 0 0 1065.98 510.34Z" fill="#34a853"/><path d="M1070.17 463.15A77 77 0 0 1 1075.00 463.00L1075.00 509.00A31 31 0 0 0 1073.05 509.06Z" fill="#ff6d01"/><path d="M1144.7 561 L1250 561" fill="none" stroke="#9e9e9e" stroke-width="1.2"/><circle cx="1144.7" cy="561" r="2" fill="#9e9e9e"/><text x="1250" y="557.5" font-size="12" fill="#222" text-anchor="end">ค่าวัสดุ-อุปกรณ์</text><text x="1250" y="572.0" font-size="12" fill="#9e9e9e" text-anchor="end">59.2%</text><path d="M1002 544.4 L900.8 544.4" fill="none" stroke="#9e9e9e" stroke-width="1.2"/><circle cx="1002" cy="544.4" r="2" fill="#9e9e9e"/><text x="900.8" y="541" font-size="12" fill="#222" text-anchor="start">ค่าแรงงาน</text><text x="900.8" y="555.5" font-size="12" fill="#9e9e9e" text-anchor="start">29.6%</text><path d="M1040.5 475.6 L992.5 502.5 L900.8 502.5" fill="none" stroke="#9e9e9e" stroke-width="1.2"/><circle cx="1040.5" cy="475.6" r="2" fill="#9e9e9e"/><text x="900.8" y="499" font-size="12" fill="#222" text-anchor="start">ค่าขนส่ง-เครื่องจั...</text><text x="900.8" y="513.5" font-size="12" fill="#9e9e9e" text-anchor="start">6.5%</text><path d="M1062 468.6 L989.7 477.5 L900.8 477.5" fill="none" stroke="#9e9e9e" stroke-width="1.2"/><circle cx="1062" cy="468.6" r="2" fill="#9e9e9e"/><text x="900.8" y="474" font-size="12" fill="#222" text-anchor="start">ค่าออกแบบ-ที่ปรึ...</text><text x="900.8" y="488.5" font-size="12" fill="#9e9e9e" text-anchor="start">3.7%</text></svg>
<div style="position:absolute;left:0px;top:846px;width:1440px;height:1px;background:#c4c7c5"></div>
<div style="position:absolute;left:0px;top:847px;width:1440px;height:16px;background:#f8f8f8"></div>
<div style="position:absolute;left:45px;top:847px;width:3px;height:16px;background:#d0d0d0"></div>
<div style="position:absolute;left:1424px;top:847px;width:1px;height:16px;background:#c4c7c5"></div>
<div style="position:absolute;left:0px;top:863px;width:1440px;height:1px;background:#c4c7c5"></div>
<div style="position:absolute;left:0px;top:864px;width:1440px;height:36px;background:#f9fbfd"></div>
<svg style="left:55px;top:877px" width="14" height="10" viewBox="0 0 14 10"><path d="M0 1h14M0 5h14M0 9h14" stroke="#444746" stroke-width="1.6"/></svg>
<div style="position:absolute;left:94px;top:864px;width:130px;height:33px;background:#e1e6ee"></div>
<div style="position:absolute;left:94px;top:897px;width:130px;height:3px;background:#a142f4"></div>
<svg style="left:108px;top:875px" width="13" height="17" viewBox="0 0 13 17"><path d="M3 7V4.5a3.5 3.5 0 0 1 7 0V7" fill="none" stroke="#0b57d0" stroke-width="2"/><rect x="0.5" y="6.5" width="12" height="10" rx="1.5" fill="#0b57d0"/><circle cx="6.5" cy="11.5" r="1.3" fill="#fff"/></svg>
<div class="a" style="left:126px;top:871px;font-size:14.8px;color:#0b57d0;white-space:nowrap;font-weight:bold">4-ภาพรวม</div>
<svg style="left:205px;top:881px" width="8" height="4" viewBox="0 0 8 4"><path d="M0 0h8L4 4z" fill="#0b57d0"/></svg>
<div style="position:absolute;left:224px;top:897px;width:114px;height:3px;background:#fbbc04"></div>
<svg style="left:240px;top:875px" width="13" height="17" viewBox="0 0 13 17"><path d="M3 7V4.5a3.5 3.5 0 0 1 7 0V7" fill="none" stroke="#3c4043" stroke-width="2"/><rect x="0.5" y="6.5" width="12" height="10" rx="1.5" fill="#3c4043"/><circle cx="6.5" cy="11.5" r="1.3" fill="#fff"/></svg>
<div class="a" style="left:258px;top:871px;font-size:14.8px;color:#3c4043;white-space:nowrap;">0-วิธีใช้</div>
<svg style="left:318px;top:881px" width="8" height="4" viewBox="0 0 8 4"><path d="M0 0h8L4 4z" fill="#3c4043"/></svg>
<div style="position:absolute;left:338px;top:897px;width:146px;height:3px;background:#34a853"></div>
<div class="a" style="left:351px;top:871px;font-size:14.8px;color:#3c4043;white-space:nowrap;">1-ข้อมูลโครงการ</div>
<svg style="left:464px;top:881px" width="8" height="4" viewBox="0 0 8 4"><path d="M0 0h8L4 4z" fill="#3c4043"/></svg>
<div style="position:absolute;left:484px;top:897px;width:100px;height:3px;background:#4285f4"></div>
<div class="a" style="left:497px;top:871px;font-size:14.8px;color:#3c4043;white-space:nowrap;">2-รายรับ</div>
<svg style="left:564px;top:881px" width="8" height="4" viewBox="0 0 8 4"><path d="M0 0h8L4 4z" fill="#3c4043"/></svg>
<div style="position:absolute;left:584px;top:897px;width:107px;height:3px;background:#ea4335"></div>
<div class="a" style="left:597px;top:871px;font-size:14.8px;color:#3c4043;white-space:nowrap;">3-รายจ่าย</div>
<svg style="left:670px;top:881px" width="8" height="4" viewBox="0 0 8 4"><path d="M0 0h8L4 4z" fill="#3c4043"/></svg>
<div style="position:absolute;left:691px;top:897px;width:161px;height:3px;background:#1ba1e2"></div>
<svg style="left:706px;top:875px" width="13" height="17" viewBox="0 0 13 17"><path d="M3 7V4.5a3.5 3.5 0 0 1 7 0V7" fill="none" stroke="#3c4043" stroke-width="2"/><rect x="0.5" y="6.5" width="12" height="10" rx="1.5" fill="#3c4043"/><circle cx="6.5" cy="11.5" r="1.3" fill="#fff"/></svg>
<div class="a" style="left:724px;top:871px;font-size:14.8px;color:#3c4043;white-space:nowrap;">5-เจาะโครงการ</div>
<svg style="left:832px;top:881px" width="8" height="4" viewBox="0 0 8 4"><path d="M0 0h8L4 4z" fill="#3c4043"/></svg>
<div style="position:absolute;left:852px;top:897px;width:159px;height:3px;background:#26b59a"></div>
<svg style="left:868px;top:875px" width="13" height="17" viewBox="0 0 13 17"><path d="M3 7V4.5a3.5 3.5 0 0 1 7 0V7" fill="none" stroke="#3c4043" stroke-width="2"/><rect x="0.5" y="6.5" width="12" height="10" rx="1.5" fill="#3c4043"/><circle cx="6.5" cy="11.5" r="1.3" fill="#fff"/></svg>
<div class="a" style="left:886px;top:871px;font-size:14.8px;color:#3c4043;white-space:nowrap;">6-กระแสเงินสด</div>
<svg style="left:992px;top:881px" width="8" height="4" viewBox="0 0 8 4"><path d="M0 0h8L4 4z" fill="#3c4043"/></svg>
<div style="position:absolute;left:1011px;top:897px;width:153px;height:3px;background:#f27b22"></div>
<svg style="left:1027px;top:875px" width="13" height="17" viewBox="0 0 13 17"><path d="M3 7V4.5a3.5 3.5 0 0 1 7 0V7" fill="none" stroke="#3c4043" stroke-width="2"/><rect x="0.5" y="6.5" width="12" height="10" rx="1.5" fill="#3c4043"/><circle cx="6.5" cy="11.5" r="1.3" fill="#fff"/></svg>
<div class="a" style="left:1044px;top:871px;font-size:14.8px;color:#3c4043;white-space:nowrap;">7-เปรียบเทียบ</div>
<svg style="left:1144px;top:881px" width="8" height="4" viewBox="0 0 8 4"><path d="M0 0h8L4 4z" fill="#3c4043"/></svg>
<div style="position:absolute;left:1164px;top:897px;width:3px;height:3px;background:#fbbc04"></div>
<div style="position:absolute;left:1168px;top:872px;width:1px;height:20px;background:#c4c7c5"></div>
<svg style="left:1187px;top:877px" width="8" height="12" viewBox="0 0 8 12"><path d="M7 1L2 6l5 5" fill="none" stroke="#b8bcc0" stroke-width="1.6"/></svg>
<svg style="left:1227px;top:877px" width="8" height="12" viewBox="0 0 8 12"><path d="M1 1l5 5-5 5" fill="none" stroke="#444746" stroke-width="1.6"/></svg>
<svg style="left:1408px;top:879px" width="8" height="11" viewBox="0 0 8 11"><path d="M7 1L2 5.5l5 4.5" fill="none" stroke="#444746" stroke-width="1.6"/></svg>
</body></html>
